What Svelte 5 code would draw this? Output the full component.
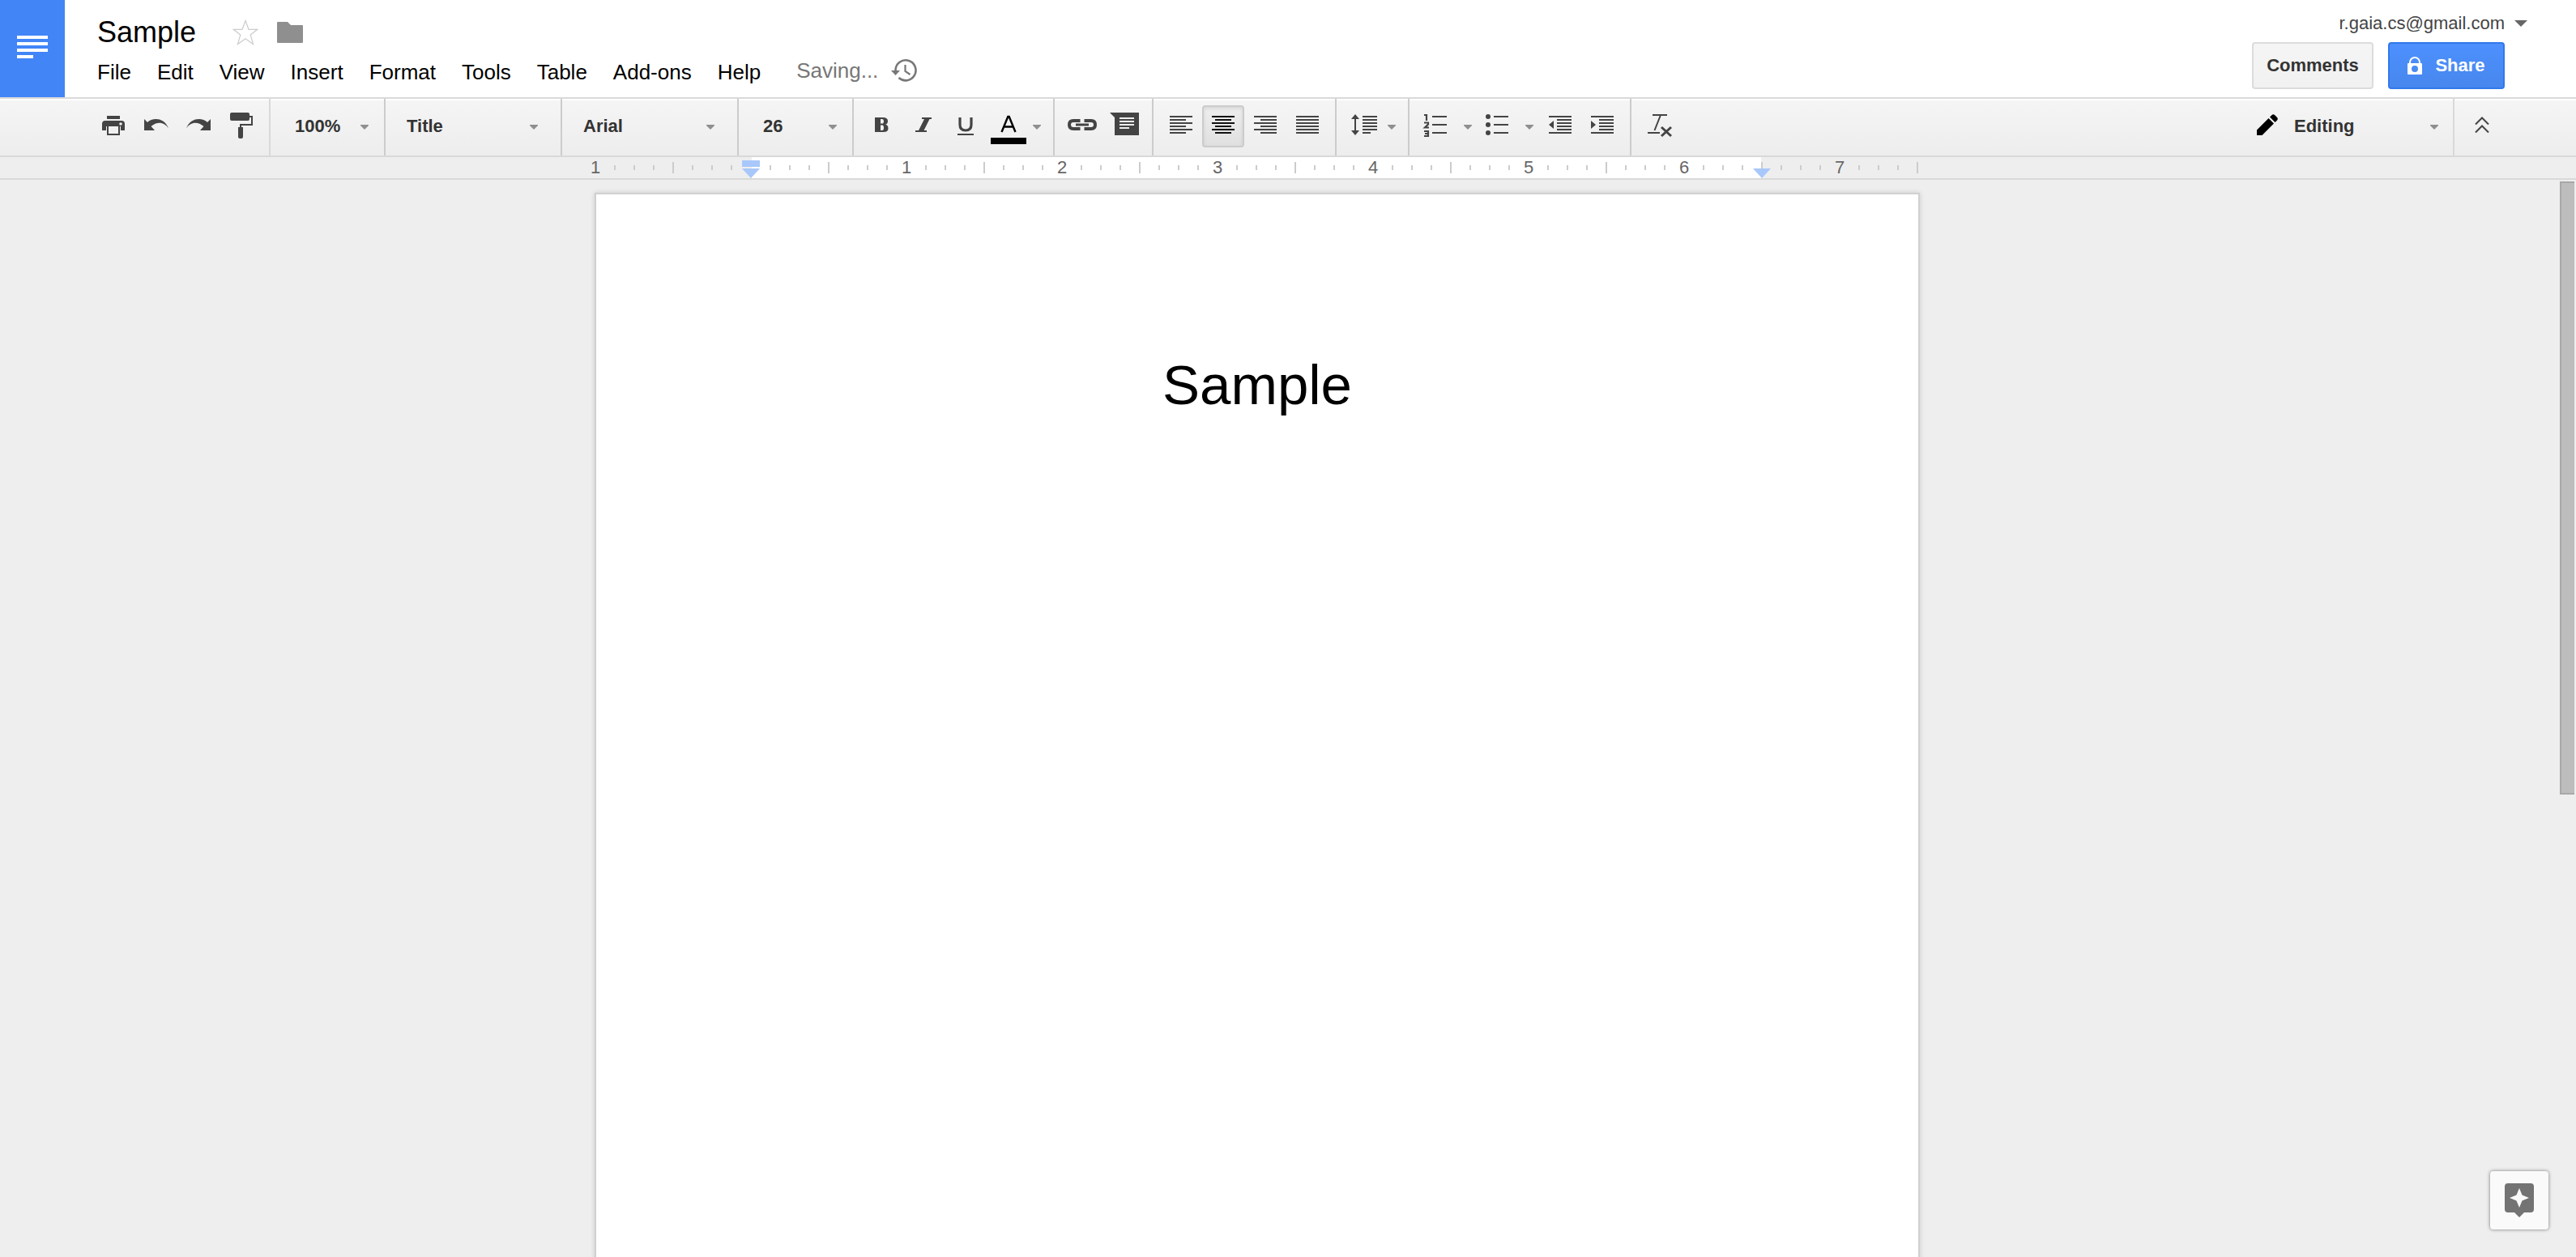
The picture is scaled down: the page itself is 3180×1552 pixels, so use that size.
<script lang="ts">
  const menus = ['File', 'Edit', 'View', 'Insert', 'Format', 'Tools', 'Table', 'Add-ons', 'Help'];
  let align = $state('center');

  // Eight divisions per inch, starting one inch left of the text margin.
  const ticks = Array.from({ length: 69 }, (_, i) => {
    if (i % 8 === 0 && i !== 8 && i !== 68) return { kind: 'number', label: String(Math.abs(i / 8 - 1)) };
    if (i === 8) return { kind: 'blank', label: '' };
    return { kind: i % 4 === 0 ? 'half' : 'small', label: '' };
  });

  const alignments = [
    { id: 'left', label: 'Left align', d: 'M4 6h28M4 10h20M4 14h28M4 18h20M4 22h28M4 26h20' },
    { id: 'center', label: 'Center align', d: 'M4 6h28M8 10h20M4 14h28M8 18h20M4 22h28M8 26h20' },
    { id: 'right', label: 'Right align', d: 'M4 6h28M12 10h20M4 14h28M12 18h20M4 22h28M12 26h20' },
    { id: 'justify', label: 'Justify', d: 'M4 6h28M4 10h28M4 14h28M4 18h28M4 22h28M4 26h28' }
  ];
</script>

{#snippet caret()}
  <svg class="caret" width="10" height="6" viewBox="0 0 10 6" aria-hidden="true"><path d="M0 0h10v1L5 6 0 1z" /></svg>
{/snippet}

{#snippet picker(name: string, value: string, size: string)}
  <div class="picker {size}">
    <select aria-label={name}><option>{value}</option></select>
    {@render caret()}
  </div>
{/snippet}

<div class="app">
  <header>
    <a class="logo" href="#home" aria-label="Docs home">
      <svg width="38" height="28" viewBox="0 0 38 28"><path fill="#fff" d="M0 0h38v4H0zM0 8h38v4H0zM0 16h38v4H0zM0 24h20v4H0z" /></svg>
    </a>
    <div class="heading">
      <div class="name-row">
        <button class="name">Sample</button>
        <button aria-label="Star">
          <svg width="32" height="32" viewBox="0 0 32 32"><path fill="none" stroke="#ccc" stroke-width="1.2" d="M16 1.5l4 10.8h10.800l-8.600 6.700 3.300 11.500-9.500-6.700-9.500 6.700 3.300-11.500-8.600-6.700H12z" /></svg>
        </button>
        <button aria-label="Move to folder">
          <svg width="32" height="26" viewBox="0 0 32 26"><path fill="#8f8f8f" d="M1 0h12l4 4h14q1 0 1 1v20q0 1-1 1H1q-1 0-1-1V1q0-1 1-1z" /></svg>
        </button>
      </div>
      <nav>
        {#each menus as menu}<button>{menu}</button>{/each}
        <span class="status">Saving...</span>
        <button class="history" aria-label="Version history">
          <svg width="32" height="32" viewBox="0 0 32 32" fill="none" stroke="#777" stroke-width="2.600"><path d="M5.500 17.500V15.500a12.500 12.500 0 1 1 4 9.500" /><path stroke-width="2.200" d="M17.500 9v8l6 4" /><path fill="#777" stroke="none" d="M0 16h11l-5.500 6z" /></svg>
        </button>
      </nav>
    </div>
    <div class="account">
      <button class="email">r.gaia.cs@gmail.com
        <svg width="16" height="8" viewBox="0 0 16 8"><path fill="#666" d="M0 0h16L8 8z" /></svg>
      </button>
      <div class="actions">
        <button class="comments">Comments</button>
        <button class="share">
          <svg width="18" height="22" viewBox="0 0 18 22"><path fill="#fff" fill-rule="evenodd" d="M2 8V7a7 7 0 0 1 14 0v1h1q1 0 1 1v12q0 1-1 1H1q-1 0-1-1V9q0-1 1-1zM4 8h10V7A5 5 0 0 0 4 7zM9 11a4 4 0 1 0 0 8 4 4 0 1 0 0-8z" /></svg>
          Share
        </button>
      </div>
    </div>
  </header>

  <div class="toolbar" role="toolbar" aria-label="Formatting">
    <div class="group first">
      <button aria-label="Print"><svg viewBox="0 0 36 36"><path d="M10 5h16v4H10zM8 11h20q4 0 4 4v8h-5v-5H9v5H4v-8q0-4 4-4z" /><path fill="none" stroke="#444" stroke-width="2" d="M11 18v10h14V18" /><circle cx="27" cy="15" r="1.800" fill="#eee" /></svg></button>
      <button aria-label="Undo"><svg viewBox="0 0 36 36"><path d="M4 9l4 4C14 7.500 28 6 34 20.500 29 12.500 20 11.500 12.500 18l4.500 5H4z" /></svg></button>
      <button aria-label="Redo"><svg viewBox="0 0 36 36"><path d="M34 9l-4 4C24 7.500 10 6 4 20.500 9 12.500 18 11.500 25.500 18L21 23h13z" /></svg></button>
      <button aria-label="Paint format"><svg viewBox="0 0 36 36"><path d="M8 1h20q2 0 2 2v6q0 2-2 2H8q-2 0-2-2V3q0-2 2-2zM16 19h6v12q0 2-2 2h-2q-2 0-2-2z" /><path fill="none" stroke="#444" stroke-width="2" d="M30 6h3v10H19v4" /></svg></button>
    </div>
    {@render picker('Zoom', '100%', 'narrow')}
    {@render picker('Styles', 'Title', 'wide')}
    {@render picker('Font', 'Arial', 'wide')}
    {@render picker('Font size', '26', 'narrow')}
    <div class="group">
      <button aria-label="Bold"><svg viewBox="0 0 36 36"><path fill-rule="evenodd" d="M10 7h10q6 0 6 4.500 0 3.500-3 4.200 3.500.8 3.500 4.800 0 4.500-6 4.500H10zM17 9v5.500h2q2 0 2-2.800T19 9zM17 16.500V23h2q2 0 2-3.200t-2-3.300z" /></svg></button>
      <button aria-label="Italic"><svg viewBox="0 0 36 36"><path d="M16 7h12v2h-2.500L18.500 23H22v2H8v-2h4L19 9h-3z" /></svg></button>
      <button aria-label="Underline"><svg viewBox="0 0 36 36"><path d="M8 27h20v2H8z" /><path fill="none" stroke="#444" stroke-width="3.200" d="M11 7v9q0 7 7 7t7-7V7" /></svg></button>
      <button class="color" aria-label="Text color"><svg width="44" viewBox="0 0 44 36" class="color-icon"><path fill="none" stroke="#000" stroke-width="2.400" d="M13.500 25l7.800-19h1.400l7.800 19M16.500 18.500h11" /></svg><span class="swatch"></span></button>
      <button class="drop end" aria-label="Text color options">{@render caret()}</button>
    </div>
    <div class="group">
      <button aria-label="Insert link"><svg viewBox="0 0 36 36"><path fill="none" stroke="#444" stroke-width="4" d="M15.500 11H7q-5 0-5 5t5 5h8.500M20.500 11H29q5 0 5 5t-5 5h-8.500" /><path d="M10 14.500h16v3H10z" /></svg></button>
      <button aria-label="Insert comment"><svg viewBox="0 0 36 36"><path d="M0 1h36v28H6V7z" /><path fill="none" stroke="#eee" stroke-width="2" d="M12 8h18M12 12h18M12 16h18M12 20h12" /></svg></button>
    </div>
    <div class="group">
      {#each alignments as a}
        <button aria-label={a.label} aria-pressed={align === a.id} class:active={align === a.id} onclick={() => (align = a.id)}>
          <svg viewBox="0 0 36 36"><path class="line" d={a.d} /></svg>
        </button>
      {/each}
    </div>
    <div class="group">
      <button aria-label="Line spacing"><svg viewBox="0 0 36 36"><path d="M7 3l5 6H8v14h4l-5 6-5-6h4V9H2z" /><path class="line" d="M16 6h18M16 10h18M16 14h18M16 18h18M16 22h18M16 26h10" /></svg></button>
      <button class="drop end" aria-label="Line spacing options">{@render caret()}</button>
    </div>
    <div class="group">
      <button aria-label="Numbered list"><svg viewBox="0 0 36 36"><path class="line" d="M12 6h18M12 16h18M12 26h18" /><path fill="none" stroke="#444" stroke-width="2.200" d="M2 4h3v7M2 13.500h5v2l-4 4h5M2 24h5v6H2M3 27h4" /></svg></button>
      <button class="drop list" aria-label="Numbered list options">{@render caret()}</button>
      <button aria-label="Bulleted list"><svg viewBox="0 0 36 36"><path class="line" d="M12 6h18M12 16h18M12 26h18" /><circle cx="5" cy="6" r="3" /><circle cx="5" cy="16" r="3" /><circle cx="5" cy="26" r="3" /></svg></button>
      <button class="drop list" aria-label="Bulleted list options">{@render caret()}</button>
      <button aria-label="Decrease indent"><svg viewBox="0 0 36 36"><path class="line" d="M4 6h28M14 10h18M14 14h18M14 18h18M14 22h18M4 26h28" /><path d="M10 11v10l-6-5z" /></svg></button>
      <button aria-label="Increase indent"><svg viewBox="0 0 36 36"><path class="line" d="M4 6h28M14 10h18M14 14h18M14 18h18M14 22h18M4 26h28" /><path d="M4 11v10l6-5z" /></svg></button>
    </div>
    <div class="group last">
      <button aria-label="Clear formatting"><svg viewBox="0 0 36 36"><path fill="none" stroke="#444" stroke-width="2" d="M10 4h18M4 26h15M20 4l-7.500 19" /><path fill="none" stroke="#444" stroke-width="3" d="M21 19l12 11M33 19L21 30" /></svg></button>
    </div>
    <div class="mode">
      <svg class="pencil" width="26" height="26" viewBox="0 0 26 26" aria-hidden="true"><path d="M0 19.500L14.500 5l6.500 6.500L6.500 26H0zM16 3.500l2.300-2.300q2-2 4 0l2.500 2.500q2 2 0 4L22.500 10z" /></svg>
      <select aria-label="Editing mode"><option>Editing</option></select>
      {@render caret()}
    </div>
    <div class="group collapse">
      <button aria-label="Hide the menus"><svg viewBox="0 0 36 36"><path fill="none" stroke="#444" stroke-width="2" d="M10 15.500l8-8 8 8M10 25.500l8-8 8 8" /></svg></button>
    </div>
  </div>

  <div class="ruler">
    <div class="scale">
      {#each ticks as tick}
        <span class="tick {tick.kind}">{tick.label}</span>
      {/each}
      <svg class="marker start" width="22" height="22" viewBox="0 0 22 22"><path d="M0 0h22v8H0zM0 10h22L11 22z" /></svg>
      <svg class="marker finish" width="22" height="22" viewBox="0 0 22 22"><path d="M0 10h22L11 22z" /></svg>
    </div>
  </div>

  <main>
    <article class="page">
      <h1>Sample</h1>
    </article>
    <div class="scrollbar"><div class="thumb"></div></div>
    <button class="explore" aria-label="Explore">
      <svg width="36" height="42" viewBox="0 0 36 42"><path fill="#737373" d="M4 0h28q4 0 4 4v28q0 4-4 4h-8l-6 6-6-6H4q-4 0-4-4V4q0-4 4-4z" /><path fill="#fafafa" d="M18 6l3.500 8.500L30 18l-8.500 3.500L18 30l-3.500-8.500L6 18l8.500-3.500z" /></svg>
    </button>
  </main>
</div>

<style>
  :global(body) {
    margin: 0;
  }

  .app {
    display: flex;
    flex-direction: column;
    height: 100vh;
    overflow: hidden;
    background: #eee;
    color: #000;
    font-family: Arial, 'Liberation Sans', sans-serif;
    font-size: 22px;
  }

  button,
  select {
    margin: 0;
    padding: 0;
    border: 0;
    background: none;
    color: inherit;
    font: inherit;
  }

  select {
    appearance: none;
  }

  svg {
    display: block;
    flex: none;
  }

  header {
    display: flex;
    height: 120px;
    flex: none;
    background: #fff;
  }

  .logo {
    display: flex;
    justify-content: center;
    align-items: center;
    box-sizing: border-box;
    width: 80px;
    padding-bottom: 4px;
    background: #4285f7;
  }

  .heading {
    flex: 1;
    padding: 20px 0 0 40px;
  }

  .name-row {
    display: flex;
    align-items: center;
    height: 40px;
  }

  .name {
    margin-right: 45px;
    font-size: 36px;
    line-height: 40px;
  }

  .name-row button + button + button {
    margin-left: 23px;
  }

  nav {
    display: flex;
    align-items: center;
    gap: 32px;
    margin-top: 11px;
    font-size: 26px;
    line-height: 32px;
  }

  .status {
    margin: 0 -16px 4px 12px;
    color: #777;
  }

  .history {
    margin-bottom: 4px;
  }

  .account {
    display: flex;
    flex-direction: column;
    align-items: flex-end;
    gap: 10px;
    padding: 16px 60px 0 0;
  }

  .email {
    display: flex;
    align-items: center;
    gap: 12px;
    color: #444;
    line-height: 26px;
  }

  .actions {
    display: flex;
    gap: 18px;
    padding-right: 28px;
    font-weight: bold;
  }

  .actions button {
    display: flex;
    justify-content: center;
    align-items: center;
    height: 58px;
    border: 2px solid #dcdcdc;
    border-radius: 4px;
  }

  .actions .comments {
    width: 150px;
    background: linear-gradient(#f5f5f5, #f1f1f1);
    color: #333;
  }

  .actions .share {
    gap: 16px;
    width: 144px;
    border-color: #3079ed;
    background: linear-gradient(#4d90fe, #4787ed);
    color: #fff;
  }

  .toolbar {
    display: flex;
    flex: none;
    height: 70px;
    border-top: 2px solid #d9d9d9;
    border-bottom: 2px solid #d9d9d9;
    background: linear-gradient(#fff 2px, #f5f5f5 2px, #ededed);
    color: #333;
    font-weight: bold;
  }

  .group {
    display: flex;
    padding: 8px 8px 10px;
    border-right: 2px solid #ccc;
  }

  .group button {
    display: flex;
    justify-content: center;
    align-items: center;
    box-sizing: border-box;
    width: 52px;
    height: 52px;
  }

  .group svg:not(.caret):not(.color-icon) {
    width: 36px;
    height: 36px;
  }

  .group svg:not(.caret) {
    fill: #444;
  }

  .group.first {
    padding-left: 114px;
    padding-right: 10px;
    border-color: #d9d9d9;
  }

  .group.last,
  .group.collapse {
    border: 0;
  }

  .group.collapse {
    padding-right: 90px;
  }

  .line {
    fill: none;
    stroke: #444;
    stroke-width: 2;
  }

  .group .active {
    border: 2px solid #ccc;
    border-radius: 4px;
    background: linear-gradient(#eee, #e0e0e0);
    box-shadow: inset 0 2px 4px rgba(0, 0, 0, 0.1);
  }

  .active .line {
    stroke: #111;
  }

  .group .color {
    flex-direction: column;
    width: 54px;
  }

  .color-icon {
    height: 36px;
    margin-top: 4px;
  }

  .swatch {
    width: 44px;
    height: 8px;
    margin-top: -4px;
    background: #000;
  }

  .group .drop {
    width: 16px;
  }

  .group .drop.end {
    margin-right: 4px;
  }

  .group .drop.list {
    width: 24px;
  }

  .caret {
    margin-top: 2px;
    fill: #8f8f8f;
  }

  .picker {
    display: grid;
    align-items: center;
    box-sizing: border-box;
    padding: 8px 0 10px;
    border-right: 2px solid #ccc;
  }

  .picker select,
  .picker .caret {
    grid-area: 1 / 1;
  }

  .picker .caret {
    justify-self: end;
    pointer-events: none;
  }

  .picker select {
    width: 100%;
    height: 52px;
    padding-bottom: 2px;
  }

  .narrow {
    width: 142px;
  }

  .narrow select {
    padding-left: 30px;
  }

  .narrow .caret {
    margin-right: 19px;
  }

  .wide {
    width: 218px;
  }

  .wide select {
    padding-left: 26px;
  }

  .wide .caret {
    margin-right: 28px;
  }

  .mode {
    display: flex;
    align-items: center;
    margin-left: auto;
    padding: 8px 18px 10px 0;
    border-right: 2px solid #d9d9d9;
  }

  .pencil {
    margin: 0 20px 4px 0;
  }

  .mode select {
    width: 168px;
    height: 52px;
    padding-bottom: 2px;
  }

  .ruler {
    display: flex;
    justify-content: center;
    flex: none;
    padding-right: 78px;
    border-bottom: 2px solid #d9d9d9;
  }

  .scale {
    position: relative;
    display: flex;
    align-items: center;
    height: 26px;
    background: linear-gradient(90deg, transparent 205px, #fff 205px, #fff 1451px, transparent 1451px);
  }

  .tick {
    display: flex;
    justify-content: center;
    width: 24px;
    color: #666;
    font-size: 22px;
    line-height: 26px;
  }

  .small::before,
  .half::before {
    content: '';
    width: 2px;
    height: 6px;
    background: #ccc;
  }

  .half::before {
    height: 14px;
  }

  .marker {
    position: absolute;
    bottom: 0;
    fill: #a8c7fa;
  }

  .start {
    left: 193px;
  }

  .finish {
    left: 1441px;
  }

  main {
    position: relative;
    display: flex;
    justify-content: center;
    flex: 1;
    min-height: 0;
    padding: 16px 76px 0 0;
  }

  .page {
    box-sizing: border-box;
    width: 1636px;
    height: 2112px;
    padding: 190px 192px;
    border: 2px solid #d0d0d0;
    background: #fff;
    box-shadow: 0 0 6px rgba(0, 0, 0, 0.15);
  }

  h1 {
    margin: 0;
    font-size: 69px;
    font-weight: normal;
    line-height: 92px;
    text-align: center;
  }

  .scrollbar {
    position: absolute;
    top: 2px;
    right: 2px;
    bottom: 0;
    width: 18px;
  }

  .thumb {
    box-sizing: border-box;
    height: 57%;
    border: 2px solid #a8a8a8;
    border-right: 0;
    background: #bdbdbd;
  }

  .explore {
    position: absolute;
    right: 34px;
    bottom: 34px;
    display: flex;
    justify-content: center;
    align-items: center;
    width: 72px;
    height: 72px;
    border-radius: 4px;
    background: #fafafa;
    box-shadow: 0 0 4px rgba(0, 0, 0, 0.5);
  }
</style>
